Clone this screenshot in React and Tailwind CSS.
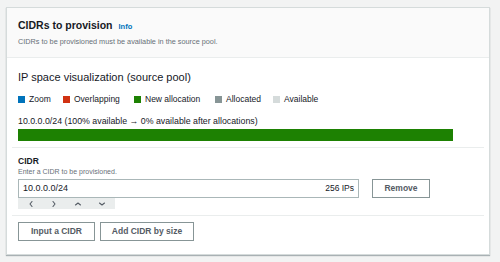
import { useState } from "react";

const legend = [
  { label: "Zoom", color: "bg-[#0073bb]", w: "w-[45px]" },
  { label: "Overlapping", color: "bg-[#d13212]", w: "w-[71px]" },
  { label: "New allocation", color: "bg-[#1d8102]", w: "w-[81px]" },
  { label: "Allocated", color: "bg-[#879596]", w: "w-[58px]" },
  { label: "Available", color: "bg-[#d5dbdb]", w: "" },
];

function Chevron({ d }) {
  return (
    <svg width="8" height="8" viewBox="0 0 8 8" fill="none" stroke="#545b64" strokeWidth="1.1" strokeLinecap="round" strokeLinejoin="round">
      <path d={d} />
    </svg>
  );
}

export default function App() {
  const [cidr, setCidr] = useState("10.0.0.0/24");

  return (
    <div className="w-[500px] h-[262px] bg-[#f2f3f3] pt-[7px] pl-[6px] font-['Liberation_Sans',Arial,sans-serif] text-[#16191f] overflow-hidden">
      <div className="w-[484px] h-[248px] bg-white border border-[#d5dbdb] shadow-[0_1px_1px_rgba(0,28,36,0.3)]">
        {/* Header */}
        <div className="h-[50px] bg-[#fafafa] border-b border-[#eaeded] pl-[11px] pt-[10px]">
          <div className="flex items-baseline gap-[6px] leading-[14px]">
            <span className="text-[10.5px] font-bold">CIDRs to provision</span>
            <span className="text-[7.5px] font-bold text-[#0073bb]">Info</span>
          </div>
          <div className="mt-[3px] text-[7.3px] leading-[10px] text-[#687078]">
            CIDRs to be provisioned must be available in the source pool.
          </div>
        </div>

        {/* Body */}
        <div className="px-[5px]">
          <div className="px-[6px] pt-[12px]">
            <div className="text-[11px] leading-[14px]">IP space visualization (source pool)</div>
            <div className="mt-[10px] flex items-center h-[10px] text-[8.5px]">
              {legend.map((l) => (
                <div key={l.label} className={`flex items-center gap-[4px] ${l.w}`}>
                  <span className={`w-[7px] h-[7px] ${l.color}`} />
                  <span>{l.label}</span>
                </div>
              ))}
            </div>
            <div className="mt-[12px] text-[8.8px] leading-[10px]">
              10.0.0.0/24 (100% available → 0% available after allocations)
            </div>
            <div className="mt-[3px] w-[435px] h-[12px] bg-[#1d8102]" />
          </div>
          <div className="mt-[6px] h-px bg-[#eaeded]" />

          <div className="px-[6px]">
            <div className="mt-[8px] text-[8.5px] leading-[10px] font-bold text-[#16191f]">CIDR</div>
            <div className="mt-[1px] text-[7px] leading-[9px] text-[#687078]">Enter a CIDR to be provisioned.</div>
            <div className="mt-[3px] flex items-start gap-[13px]">
              <div>
                <div className="w-[341px] h-[19px] border border-[#aab7b8] flex items-center justify-between px-[4px] text-[8.5px]">
                  <input
                    value={cidr}
                    onChange={(e) => setCidr(e.target.value)}
                    className="flex-1 bg-transparent outline-none text-[9px]"
                  />
                  <span className="text-[#16191f]">256 IPs</span>
                </div>
                <div className="w-[97px] h-[11px] bg-[#eaeded] flex items-center">
                  <span className="w-[24px] flex justify-center pl-[1px]"><Chevron d="M5 1.5 L3 4 L5 6.5" /></span>
                  <span className="w-[24px] flex justify-center"><Chevron d="M3 1.5 L5 4 L3 6.5" /></span>
                  <span className="w-[24px] flex justify-center"><Chevron d="M1.5 5 L4 3 L6.5 5" /></span>
                  <span className="w-[24px] flex justify-center"><Chevron d="M1.5 3 L4 5 L6.5 3" /></span>
                </div>
              </div>
              <button className="w-[58px] h-[19px] border border-[#879596] text-[8.5px] font-bold text-[#545b64]">
                Remove
              </button>
            </div>
          </div>
          <div className="mt-[6px] h-px bg-[#eaeded]" />

          <div className="px-[6px] mt-[6px] flex gap-[5px]">
            <button className="w-[77px] h-[19px] border border-[#879596] text-[8.5px] font-bold text-[#545b64]">
              Input a CIDR
            </button>
            <button className="w-[94px] h-[19px] border border-[#879596] text-[8.5px] font-bold text-[#545b64]">
              Add CIDR by size
            </button>
          </div>
        </div>
      </div>
    </div>
  );
}
